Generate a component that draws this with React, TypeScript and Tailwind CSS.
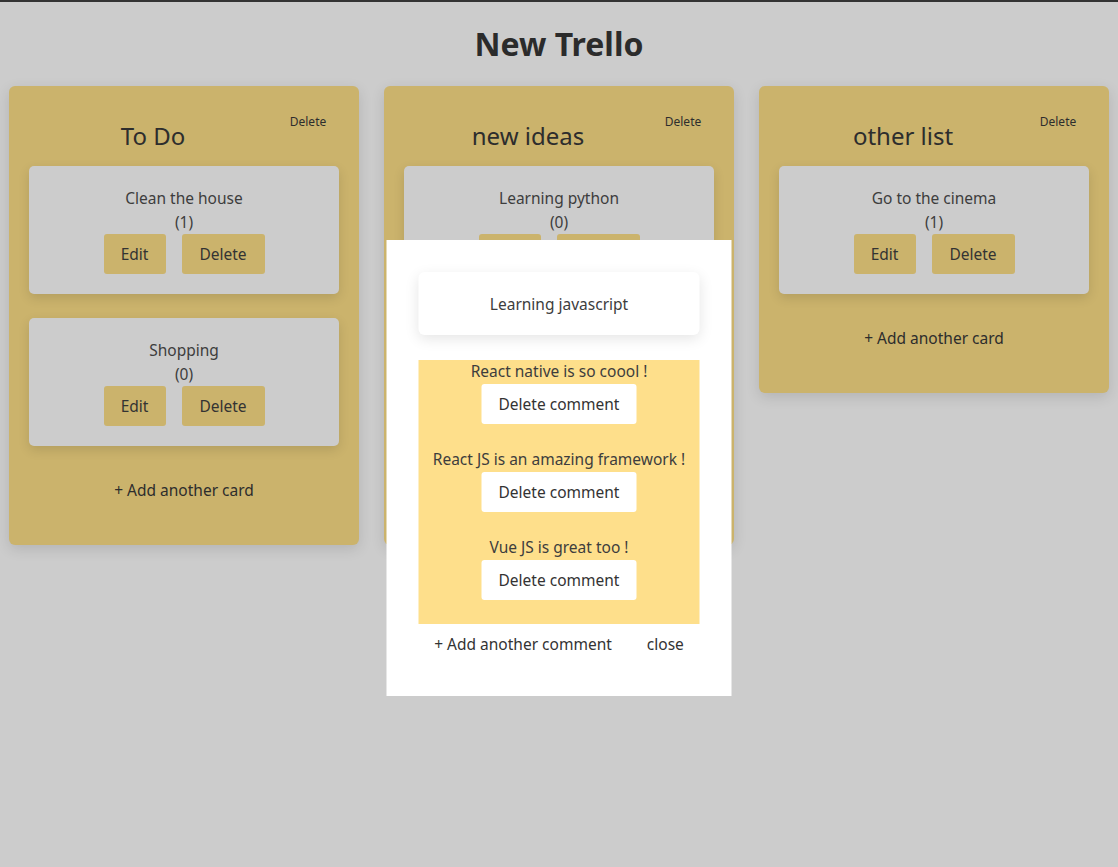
const lists = [
  {
    title: 'To Do',
    cards: [
      { title: 'Clean the house', count: 1 },
      { title: 'Shopping', count: 0 },
    ],
  },
  {
    title: 'new ideas',
    cards: [
      { title: 'Learning python', count: 0 },
      { title: 'Learning javascript', count: 3 },
    ],
  },
  {
    title: 'other list',
    cards: [{ title: 'Go to the cinema', count: 1 }],
  },
];

const comments = ['React native is so coool !', 'React JS is an amazing framework !', 'Vue JS is great too !'];

function Card({ title, count }: { title: string; count: number }) {
  return (
    <div className="bg-[#cccccc] rounded-[5px] shadow-[0_4px_12px_rgba(0,0,0,0.12)] pt-5 pb-5 flex flex-col items-center text-[15.5px] leading-6 text-[#3d3d3d]">
      <p>{title}</p>
      <p>({count})</p>
      <div className="flex gap-4">
        <button className="bg-[#cbb36c] rounded-[3px] h-10 w-[62px] text-[#333]">Edit</button>
        <button className="bg-[#cbb36c] rounded-[3px] h-10 w-[83px] text-[#333]">Delete</button>
      </div>
    </div>
  );
}

export default function App() {
  return (
    <div className="min-h-[867px] bg-[#cccccc] border-t-2 border-[#333] font-['Noto_Sans',sans-serif] text-[#333] relative">
      <h1 className="text-center text-[32px] font-bold leading-none pt-[26px] text-[#2b2b2b]">New Trello</h1>
      <div className="flex items-start gap-[25px] px-[9px] mt-[26px]">
        {lists.map((list) => (
          <section
            key={list.title}
            className="w-[350px] bg-[#cbb36c] rounded-[6px] shadow-[0_4px_14px_rgba(0,0,0,0.12)] px-5 pt-[24px] pb-[43px]"
          >
            <div className="flex items-start">
              <h2 className="flex-1 text-center text-[24px] leading-7 mt-[12px] text-[#2d2d2d]">{list.title}</h2>
              <button className="w-[62px] mt-[2px] text-[12px] leading-5 text-[#2d2d2d]">Delete</button>
            </div>
            <div className="flex flex-col gap-6 mt-4">
              {list.cards.map((c) => (
                <Card key={c.title} {...c} />
              ))}
            </div>
            <button className="block w-full text-center text-[15.5px] leading-6 mt-8 text-[#2d2d2d]">+ Add another card</button>
          </section>
        ))}
      </div>

      <div className="absolute top-[238px] left-1/2 -translate-x-1/2 w-[345px] bg-white px-8 pt-8 pb-10 text-[15.5px] leading-6 text-[#3d3d3d]">
        <div className="bg-white rounded-[6px] shadow-[0_4px_14px_rgba(0,0,0,0.1)] h-[63px] flex items-center justify-center">
          Learning javascript
        </div>
        <div className="bg-[#fedf8b] mt-[25px]">
          {comments.map((c) => (
            <div key={c} className="flex flex-col items-center pb-6">
              <p className="leading-[23px]">{c}</p>
              <button className="bg-white rounded-[3px] h-10 w-[155px] mt-px text-[#333]">Delete comment</button>
            </div>
          ))}
        </div>
        <div className="flex justify-center gap-[35px] mt-2 text-[#333]">
          <button>+ Add another comment</button>
          <button>close</button>
        </div>
      </div>
    </div>
  );
}
